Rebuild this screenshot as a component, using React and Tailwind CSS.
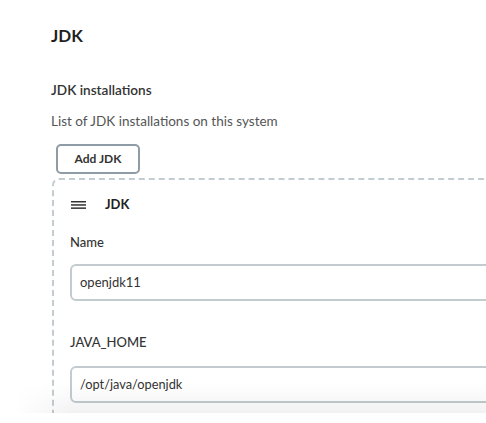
import React from "react";

export default function App() {
  return (
    <div className="relative w-[486px] h-[423px] overflow-hidden bg-white text-[#333]" style={{ fontFamily: "Lato, 'Noto Sans', sans-serif" }}>
      <div className="pl-[51px] pt-[26px] w-[700px]">
        <h1 className="text-[17px] leading-[20px] font-bold text-[#1f1f1f]">JDK</h1>
        <div className="mt-[35px] text-[13.6px] leading-[18px] font-semibold text-[#333]">JDK installations</div>
        <div className="mt-[13px] text-[13.5px] leading-[18px] text-[#555]">List of JDK installations on this system</div>
        <button className="ml-[5px] mt-[14px] w-[84px] h-[30px] rounded-[5px] border-2 border-[#8f9ca6] text-[12px] font-bold text-[#333] flex items-center justify-center">
          Add JDK
        </button>
        <div className="mt-[4px] ml-[1px] border-2 border-dashed border-[#c3cdd1] rounded-tl-[7px] rounded-bl-[7px] pl-[16px] pt-[17px] pb-[40px]">
          <div className="flex items-center h-[16px]">
            <svg width="15" height="8" viewBox="0 0 15 8" className="ml-[1px]">
              <rect x="0" y="0" width="15" height="1.5" fill="#333" />
              <rect x="0" y="3.2" width="15" height="1.5" fill="#333" />
              <rect x="0" y="6.4" width="15" height="1.5" fill="#333" />
            </svg>
            <span className="ml-[19px] text-[13px] font-bold text-[#222]">JDK</span>
          </div>
          <div className="mt-[20px] text-[13px] leading-[18px] font-medium text-[#333]">Name</div>
          <div className="mt-[13px] h-[37px] border-2 border-[#c3cbce] rounded-[6px] flex items-center pl-[8px] text-[13px] text-[#333]">
            openjdk11
          </div>
          <div className="mt-[32px] text-[13px] leading-[18px] font-medium text-[#333]">JAVA_HOME</div>
          <div className="mt-[15px] h-[37px] border-2 border-[#c3cbce] rounded-[6px] flex items-center pl-[8px] text-[12.8px] text-[#333]">
            /opt/java/openjdk
          </div>
        </div>
      </div>
      <div className="absolute left-0 right-0 top-[383px] h-[30px] bg-gradient-to-b from-[rgba(0,0,0,0)] to-[rgba(0,0,0,0.05)] [mask-image:linear-gradient(to_right,transparent_15px,black_70px)]" />
      <div className="absolute left-0 right-0 top-[413px] h-[10px] bg-white" />
    </div>
  );
}
